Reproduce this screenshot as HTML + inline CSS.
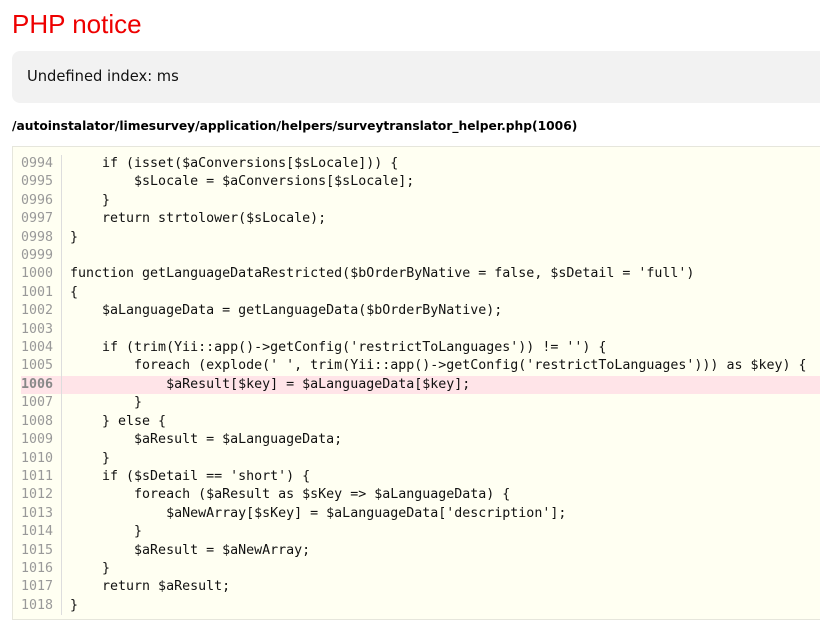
<!DOCTYPE html>
<html><head><style>
body{margin:0;background:#fff;font-family:"Liberation Sans",sans-serif;width:820px;height:631px;overflow:hidden;position:relative}
h1{position:absolute;left:12px;top:6px;margin:0;font-weight:normal;color:#e00;font-size:26px;line-height:36px}
.msg{position:absolute;left:12px;top:51px;width:830px;height:52px;background:#f2f2f2;border-radius:8px;font-family:"DejaVu Sans",sans-serif;font-size:14.7px;line-height:52px;padding-left:15px;box-sizing:border-box;color:#111}
.path{position:absolute;left:12px;top:119px;font-family:"DejaVu Sans",sans-serif;font-weight:bold;font-size:12.25px;color:#000}
.code{position:absolute;left:12px;top:146px;width:830px;height:474px;background:#fffff2;border:1px solid #e6e6dc;box-sizing:border-box}
.lines{position:absolute;left:8px;top:8px;font-family:"DejaVu Sans Mono",monospace;font-size:13.3px;line-height:18.4px;white-space:pre;color:#111}
.ln{display:block;position:relative}
.n{display:inline-block;width:40px;color:#999;border-right:1px solid #ddd;margin-right:8px}
.hl{background:#ffe4e8;width:820px}
.hl .n{color:#888;font-weight:bold}
</style></head><body>
<h1>PHP notice</h1>
<div class="msg">Undefined index: ms</div>
<div class="path">/autoinstalator/limesurvey/application/helpers/surveytranslator_helper.php(1006)</div>
<div class="code"><div class="lines"><span class="ln"><span class="n">0994</span>    if (isset($aConversions[$sLocale])) {</span><span class="ln"><span class="n">0995</span>        $sLocale = $aConversions[$sLocale];</span><span class="ln"><span class="n">0996</span>    }</span><span class="ln"><span class="n">0997</span>    return strtolower($sLocale);</span><span class="ln"><span class="n">0998</span>}</span><span class="ln"><span class="n">0999</span></span><span class="ln"><span class="n">1000</span>function getLanguageDataRestricted($bOrderByNative = false, $sDetail = 'full')</span><span class="ln"><span class="n">1001</span>{</span><span class="ln"><span class="n">1002</span>    $aLanguageData = getLanguageData($bOrderByNative);</span><span class="ln"><span class="n">1003</span></span><span class="ln"><span class="n">1004</span>    if (trim(Yii::app()->getConfig('restrictToLanguages')) != '') {</span><span class="ln"><span class="n">1005</span>        foreach (explode(' ', trim(Yii::app()->getConfig('restrictToLanguages'))) as $key) {</span><span class="ln hl"><span class="n">1006</span>            $aResult[$key] = $aLanguageData[$key];</span><span class="ln"><span class="n">1007</span>        }</span><span class="ln"><span class="n">1008</span>    } else {</span><span class="ln"><span class="n">1009</span>        $aResult = $aLanguageData;</span><span class="ln"><span class="n">1010</span>    }</span><span class="ln"><span class="n">1011</span>    if ($sDetail == 'short') {</span><span class="ln"><span class="n">1012</span>        foreach ($aResult as $sKey => $aLanguageData) {</span><span class="ln"><span class="n">1013</span>            $aNewArray[$sKey] = $aLanguageData['description'];</span><span class="ln"><span class="n">1014</span>        }</span><span class="ln"><span class="n">1015</span>        $aResult = $aNewArray;</span><span class="ln"><span class="n">1016</span>    }</span><span class="ln"><span class="n">1017</span>    return $aResult;</span><span class="ln"><span class="n">1018</span>}</span></div></div>
</body></html>
